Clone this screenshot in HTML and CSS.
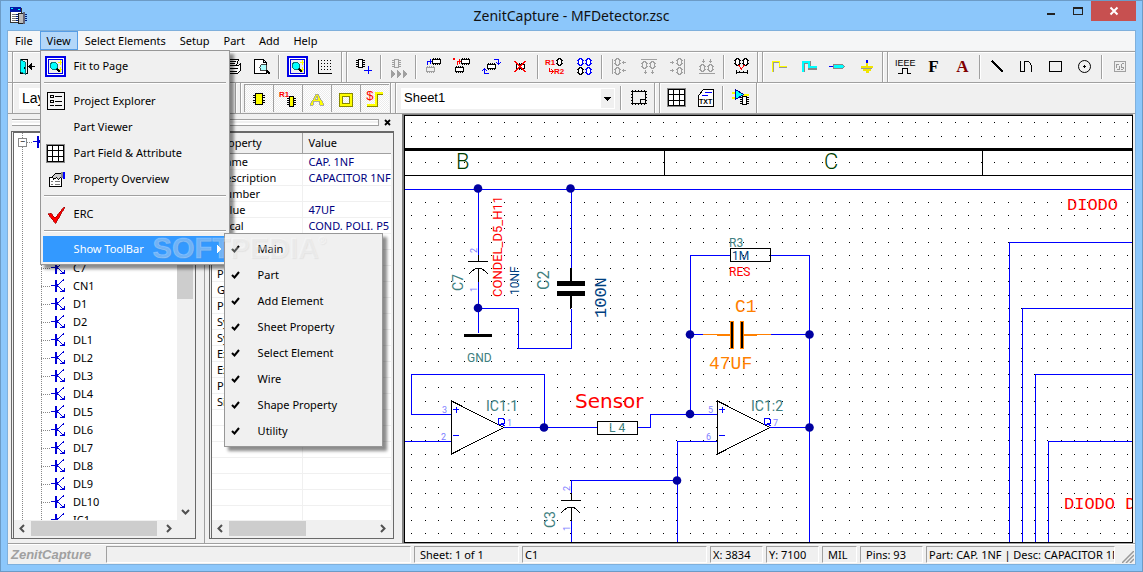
FILE: index.html
```html
<!DOCTYPE html>
<html lang="en">
<head>
<meta charset="utf-8">
<title>ZenitCapture - MFDetector.zsc</title>
<link rel="stylesheet" href="styles.css">
</head>
<body>
<svg class="defs" aria-hidden="true">
  <defs>
    <g id="chip"><path d="M2.500.5h4v8h-4zM0 1.500h2M0 3.500h2M0 5.500h2M0 7.500h2M7 1.500h2M7 3.500h2M7 5.500h2M7 7.500h2"/></g>
    <g id="chiph"><path d="M.5 2.500h8v4h-8zM1.500 1v1M3.500 1v1M5.500 1v1M7.500 1v1M1.500 7v1M3.500 7v1M5.500 7v1M7.500 7v1"/></g>
    <g id="oval"><path d="M2.500.5h2v1h1v5h-1v1h-2v-1h-1v-5h1zM0 2.500h1M0 5.500h1M6 2.500h1M6 5.500h1"/></g>
    <g id="fit">
      <path d="M3 3h19v19H3z" fill="#fff" stroke="#0000e8" stroke-width="2"/>
      <path d="M5.500 5.500h14v14h-14z" fill="#f0f0f0" stroke="#0000e8"/>
      <path d="M17.500 6v5M15 8.500h4M17.500 13v5M15 15.500h4" stroke="#ff0"/>
      <path d="M13 14l4 4" stroke="#000" stroke-width="2"/>
      <path d="M8.500 8.500h4l2 2v3l-2 2h-3l-2-2v-3z" fill="#0ff" stroke="#087878"/>
    </g>
    <g id="table"><path d="M4.500 4.500h16v16h-16zM9.500 4v17M15.500 4v17M4 9.500h17M4 15.500h17" fill="#fff" stroke="#000"/><path d="M3.500 3.500h18v18h-18z" fill="none" stroke="#888"/></g>
    <g id="npn"><path d="M0 6.500h5M6 6.500l7-6M6 6.500l7 6M9 12.500h4v-4" fill="none" stroke="#0000d8"/><path d="M5 1v12" stroke="#0000d8" stroke-width="2"/></g>
    <g id="opamp">
      <path d="M.5 0v53L53 26.500z" fill="#fff" stroke="#000"/>
      <path d="M2 8.500h6M5 5.500v6M2 34.500h6M48 17.500h4l1 1v4l-1 1h-4l-1-1v-4zM50 22l4 3" fill="none" stroke="#00f"/>
      <path d="M-13 13.500H0M-13 40.500H0M53 26.500h13" stroke="#00f"/>
    </g>
    <pattern id="grid" patternUnits="userSpaceOnUse" x="411" y="122" width="53" height="53">
      <path d="M0 .5h1m13 0h1m12 0h1m12 0h1M0 14.500h1m13 0h1m12 0h1m12 0h1M0 27.500h1m13 0h1m12 0h1m12 0h1M0 40.500h1m13 0h1m12 0h1m12 0h1" stroke="#000"/>
    </pattern>
  </defs>
</svg>

<div class="window">
  <header class="titlebar">
    <svg class="app-icon" viewBox="0 0 18 18"><path d="M1 1h11v14H1z" fill="#fff" stroke="#333"/><path d="M1 0h11v5H1z" fill="#0018a8"/><path d="M2 1h2v1H2zM9 2h2v1H9z" fill="#0ff"/><path d="M3 7h4M3 9h4M3 11h4M3 13h4" stroke="#777"/><path d="M9 6h5v10H9z" fill="#bbb" stroke="#222"/><path d="M14 5h2v12h-2z" fill="#667"/><path d="M7 7.500h2M7 9.500h2M7 11.500h2M7 13.500h2M16 7.500h2M16 9.500h2M16 11.500h2M16 13.500h2" stroke="#002080"/></svg>
    <h1 class="title">ZenitCapture - MFDetector.zsc</h1>
    <div class="caption-buttons">
      <button class="cap" aria-label="Minimize"><svg viewBox="0 0 10 10"><path d="M1 7h8v2H1z" fill="#222"/></svg></button>
      <button class="cap" aria-label="Maximize"><svg viewBox="0 0 10 10"><path d="M.5 1.500h9v7h-9z" fill="none" stroke="#222"/><path d="M0 1h10v2H0z" fill="#222"/></svg></button>
      <button class="cap close" aria-label="Close"><svg viewBox="0 0 10 10"><path d="M1.500 1.500l7 7M8.500 1.500l-7 7" stroke="#fff" stroke-width="2" shape-rendering="auto"/></svg></button>
    </div>
  </header>

  <main class="client">
    <nav class="menubar">
      <button>File</button>
      <div class="menu-anchor">
        <button class="open">View</button>
        <div class="menu view-menu">
          <button class="item"><svg class="mi" viewBox="0 0 25 25"><use href="#fit"/></svg>Fit to Page</button>
          <hr>
          <button class="item"><svg class="mi" viewBox="0 0 25 25"><path d="M4.500 3.500h17v17h-17z" fill="#f4f4f4" stroke="#000"/><path d="M7.500 6.500h3v2h-3zM7.500 11.500h3v2h-3zM7 16.500h4M12 7.500h7M12 12.500h7M12 16.500h7" fill="none" stroke="#000"/></svg>Project Explorer</button>
          <button class="item"><span class="mi"></span>Part Viewer</button>
          <button class="item"><svg class="mi" viewBox="0 0 25 25"><use href="#table"/></svg>Part Field &amp; Attribute</button>
          <button class="item"><svg class="mi" viewBox="0 0 25 25"><path d="M6.500 10.500h12v9h-12z" fill="#fff" stroke="#000"/><path d="M8 14.500h2M12 14.500h5M8 17.500h2M12 17.500h5" stroke="#777"/><path d="M9.500 9.500l3-3h6v3l-3 3-2-2-3 2z" fill="#ccc" stroke="#000"/><path d="M18 5h2v6h-2z" fill="#888"/><path d="M20 5h2v7h-2z" fill="#00f"/></svg>Property Overview</button>
          <hr>
          <button class="item"><svg class="mi" viewBox="0 0 25 25"><path d="M5 12l3-1 4 5 9-11h1l-9 16h-1z" fill="#f00" stroke="#900" stroke-width=".7"/></svg>ERC</button>
          <hr>
          <button class="item active"><span class="mi"></span>Show ToolBar<svg class="arrow" viewBox="0 0 4 8"><path d="M0 0l4 4-4 4z" fill="#fff"/></svg></button>
          <div class="menu submenu">
            <button class="item"><svg class="tick" viewBox="0 0 9 8"><path d="M1 4l2.500 2.500L8 1" /></svg>Main</button>
            <button class="item"><svg class="tick" viewBox="0 0 9 8"><path d="M1 4l2.500 2.500L8 1" /></svg>Part</button>
            <button class="item"><svg class="tick" viewBox="0 0 9 8"><path d="M1 4l2.500 2.500L8 1" /></svg>Add Element</button>
            <button class="item"><svg class="tick" viewBox="0 0 9 8"><path d="M1 4l2.500 2.500L8 1" /></svg>Sheet Property</button>
            <button class="item"><svg class="tick" viewBox="0 0 9 8"><path d="M1 4l2.500 2.500L8 1" /></svg>Select Element</button>
            <button class="item"><svg class="tick" viewBox="0 0 9 8"><path d="M1 4l2.500 2.500L8 1" /></svg>Wire</button>
            <button class="item"><svg class="tick" viewBox="0 0 9 8"><path d="M1 4l2.500 2.500L8 1" /></svg>Shape Property</button>
            <button class="item"><svg class="tick" viewBox="0 0 9 8"><path d="M1 4l2.500 2.500L8 1" /></svg>Utility</button>
          </div>
          <div class="watermark">SOFTPEDIA<sup>®</sup></div>
        </div>
      </div>
      <button>Select Elements</button>
      <button>Setup</button>
      <button>Part</button>
      <button>Add</button>
      <button>Help</button>
    </nav>

    <div class="toolbar">
      <div class="group group-main">
        <button class="tool" aria-label="Exit"><svg viewBox="0 0 24 24"><path d="M4.500 4.500h7v14h-7z" fill="#f0f0f0" stroke="#000"/><path d="M4.500 4.500l5 3v12l-5-3z" fill="#0ff" stroke="#0a7a7a"/><path d="M8 12v2M14 11.500h5" stroke="#000"/><path d="M12 11.500l4-4v8z" fill="#000"/></svg></button>
        <span class="spacer"></span>
        <button class="tool" aria-label="Print"><svg viewBox="0 0 24 24"><path d="M7.500 4.500h10l-2 6h-10zM4.500 10.500h13l2-2v7l-3 3h-12z" fill="#fff" stroke="#000"/><path d="M8 6.500h7M7 8.500h7M5 13.500h12M7 16.500h9" stroke="#000"/></svg></button>
        <button class="tool" aria-label="Print preview"><svg viewBox="0 0 24 24"><path d="M4.500 4.500h9l3 3v11h-12zM13.500 4.500v3h3" fill="#fff" stroke="#000"/><path d="M16 15l4 4" stroke="#000" stroke-width="2"/><circle cx="13.500" cy="12.500" r="3.500" fill="#aff" stroke="#444"/></svg></button>
        <i class="sep"></i>
        <button class="tool" aria-label="Fit to page"><svg viewBox="0 0 24 24"><use href="#fit" y="-1"/></svg></button>
        <button class="tool" aria-label="Grid"><svg viewBox="0 0 24 24"><path d="M4.500 5v13.500H18" fill="none" stroke="#000"/><path d="M7 5.500h11M7 8.500h11M7 11.500h11M7 14.500h11" stroke="#000" stroke-dasharray="1 2"/></svg></button>
      </div>
      <div class="group">
        <button class="tool" aria-label="Add part"><svg viewBox="0 0 24 24"><use href="#chip" x="4" y="4" fill="#fff" stroke="#000"/><path d="M16.500 11v8M12 15h8" stroke="#00f"/></svg></button>
        <i class="sep"></i>
        <button class="tool" aria-label="Next part"><svg viewBox="0 0 24 24"><use href="#chip" x="5" y="4" fill="#eee" stroke="#a0a0a0"/><path d="M4 15l4 4-4 4zM10 15l4 4-4 4zM16 15l4 4-4 4z" fill="#a0a0a0"/></svg></button>
        <i class="sep"></i>
        <button class="tool" aria-label="Rotate"><svg viewBox="0 0 24 24"><use href="#chiph" x="10" y="2" fill="#fff" stroke="#000"/><use href="#chiph" x="4" y="10" fill="#eee" stroke="#a0a0a0"/><path d="M5.500 10V6.500h4M8 4v5" fill="none" stroke="#00f"/></svg></button>
        <button class="tool" aria-label="Copy part"><svg viewBox="0 0 24 24"><use href="#chiph" x="10" y="2" fill="#fff" stroke="#000"/><use href="#chiph" x="4" y="10" fill="#fff" stroke="#000"/><path d="M6.500 10V6.500h3M8 4v5M2 3l2 2M2 5l2-2" fill="none" stroke="#f00"/></svg></button>
        <button class="tool" aria-label="Swap parts"><svg viewBox="0 0 24 24"><use href="#chiph" x="7" y="7" fill="#fff" stroke="#000"/><path d="M14 4.500h4.500V9M16 7l2.500 2L21 7M9 18.500H4.500V14M2 16l2.500-2L7 16" fill="none" stroke="#00f"/></svg></button>
        <button class="tool" aria-label="Delete part"><svg viewBox="0 0 24 24"><use href="#chiph" x="7" y="7" fill="#fff" stroke="#000"/><path d="M5.500 6l11 11M16.500 6l-11 11" stroke="#f00"/></svg></button>
        <i class="sep"></i>
        <button class="tool" aria-label="Renumber"><svg viewBox="0 0 24 24"><text x="1" y="10" class="pix red">R1</text><use href="#oval" x="12" y="3" fill="#fff" stroke="#000"/><path d="M5.500 13v3.500H9M7 14l2 2.500L7 19" fill="none" stroke="#f00"/><text x="10" y="19" class="pix red">R2</text></svg></button>
        <button class="tool" aria-label="Array"><svg viewBox="0 0 24 24" fill="#fff"><use href="#oval" x="4" y="3" stroke="#00f"/><use href="#oval" x="12" y="3" stroke="#00f"/><use href="#oval" x="4" y="12" stroke="#000"/><use href="#oval" x="12" y="12" stroke="#00f"/></svg></button>
        <i class="sep"></i>
        <button class="tool" aria-label="Align left"><svg viewBox="0 0 24 24" fill="none" stroke="#a0a0a0"><path d="M4.500 4v15M14 7.500h4M15.500 6v3M14 15.500h4M15.500 14v3"/><use href="#oval" x="6" y="3"/><use href="#oval" x="6" y="12"/></svg></button>
        <button class="tool" aria-label="Align top"><svg viewBox="0 0 24 24" fill="none" stroke="#a0a0a0"><path d="M4 4.500h16M8.500 15v4M7 17h3M15.500 15v4M14 17h3"/><use href="#oval" x="4" y="6"/><use href="#oval" x="12" y="6"/></svg></button>
        <button class="tool" aria-label="Align right"><svg viewBox="0 0 24 24" fill="none" stroke="#a0a0a0"><path d="M18.500 4v15M4 7.500h4M6.500 6v3M4 15.500h4M6.500 14v3"/><use href="#oval" x="10" y="3"/><use href="#oval" x="10" y="12"/></svg></button>
        <button class="tool" aria-label="Align bottom"><svg viewBox="0 0 24 24" fill="none" stroke="#a0a0a0"><path d="M4 18.500h16M8.500 4v4M7 6h3M15.500 4v4M14 6h3"/><use href="#oval" x="4" y="9"/><use href="#oval" x="12" y="9"/></svg></button>
        <i class="sep"></i>
        <button class="tool" aria-label="Measure"><svg viewBox="0 0 24 24"><use href="#oval" x="4" y="3" fill="#fff" stroke="#000"/><use href="#oval" x="12" y="3" fill="#fff" stroke="#000"/><path d="M8.500 10l3 4 3-4" fill="none" stroke="#f00"/><path d="M6 17.500h12M6.500 15v4M9.500 16v2M13.500 16v2M17.500 15v4" stroke="#000"/></svg></button>
      </div>
      <div class="group">
        <button class="tool" aria-label="Wire"><svg viewBox="0 0 24 24"><path d="M5.500 17V7.500h6v5H19" fill="none" stroke="#999"/><path d="M4.500 17V6.500h7v5H19" fill="none" stroke="#ff0"/></svg></button>
        <button class="tool" aria-label="Bus"><svg viewBox="0 0 24 24"><path d="M6 17V7h6v6h8" fill="none" stroke="#888" stroke-width="3"/><path d="M6 17V7h6v5h8" fill="none" stroke="#0ff" stroke-width="2"/></svg></button>
        <button class="tool" aria-label="Port"><svg viewBox="0 0 24 24"><path d="M3 11.500h4" stroke="#00f"/><path d="M7.500 9.500h9l2 2-2 2h-9z" fill="#0ff" stroke="#888"/></svg></button>
        <button class="tool" aria-label="Ground"><svg viewBox="0 0 24 24"><path d="M11 10v2M6 13.500h11M8 15.500h7" stroke="#999"/><path d="M12 8v4M6 12h12M8 14.500h8M11 17h3" stroke="#f0e400" stroke-width="2"/><path d="M12 5v3" stroke="#00f" stroke-width="2"/></svg></button>
      </div>
      <div class="group grow">
        <button class="tool" aria-label="IEEE symbol"><svg viewBox="0 0 24 24"><text x="2" y="11" class="ieee">IEEE</text><path d="M5 18.500h4v-5h5v5h4" fill="none" stroke="#000"/></svg></button>
        <button class="tool letter" aria-label="Font"><b>F</b></button>
        <button class="tool letter maroon" aria-label="Text"><b>A</b></button>
        <i class="sep"></i>
        <button class="tool" aria-label="Line"><svg viewBox="0 0 24 24"><path d="M6 6l11 11" stroke="#000" stroke-width="1.500"/></svg></button>
        <button class="tool" aria-label="Polyline"><svg viewBox="0 0 24 24"><path d="M5.500 6v10.500h4v-10h4l2 2 1 3v5" fill="none" stroke="#000"/></svg></button>
        <button class="tool" aria-label="Rectangle"><svg viewBox="0 0 24 24"><path d="M5.500 6.500h12v10h-12z" fill="none" stroke="#000"/></svg></button>
        <button class="tool" aria-label="Circle"><svg viewBox="0 0 24 24"><circle cx="11.500" cy="11.500" r="6" fill="none" stroke="#000" shape-rendering="auto"/><path d="M10 11.500h3M11.500 10v3" stroke="#000"/></svg></button>
        <i class="sep"></i>
        <button class="tool" aria-label="Image"><svg viewBox="0 0 24 24"><path d="M6.500 6.500h11v10h-11z" fill="#eee" stroke="#a0a0a0"/><path d="M8.500 13v-3l2-1M9 14.500h2l1-3M13 9v3h2v2l-2 1M14 8.500h2" fill="none" stroke="#999"/></svg></button>
      </div>
    </div>

    <div class="toolbar">
      <div class="group group-layer">
        <select class="layer" aria-label="Layer"><option>Layer</option></select>
      </div>
      <div class="group toggles">
        <button class="tool on" aria-label="Show parts"><svg viewBox="0 0 24 24"><path d="M8.500 6.500h7v11h-7z" fill="#ff0" stroke="#000"/><path d="M6 8.500h2M6 10.500h2M6 13.500h2M6 15.500h2M16 8.500h2M16 10.500h2M16 13.500h2M16 15.500h2" stroke="#000"/></svg></button>
        <button class="tool on" aria-label="Show references"><svg viewBox="0 0 24 24"><text x="3" y="10" class="pix red">R1</text><path d="M13.500 9.500h4v10h-4z" fill="#ff0" stroke="#000"/><path d="M11 11.500h2M11 13.500h2M11 15.500h2M11 17.500h2M18 11.500h2M18 13.500h2M18 15.500h2M18 17.500h2" stroke="#000"/></svg></button>
        <button class="tool on" aria-label="Show text"><svg viewBox="0 0 24 24"><path d="M5 18h3v-2l1-2h5l1 4h4L13 7h-2zM10 12l2-3 1 3z" fill="#ff0" fill-rule="evenodd" stroke="#999" stroke-width=".8"/></svg></button>
        <button class="tool on" aria-label="Show shapes"><svg viewBox="0 0 24 24"><path d="M7 8h10v10H7z" fill="none" stroke="#ff0" stroke-width="3"/><path d="M5.500 6.500h13v13h-13zM8.500 9.500h7v7h-7z" fill="none" stroke="#880"/></svg></button>
        <button class="tool on" aria-label="Show nets"><svg viewBox="0 0 24 24"><text x="3" y="13" class="dollar">$</text><path d="M4 18.500h9V6.500h7" fill="none" stroke="#880" stroke-width="3"/><path d="M4 18h9V6h7" fill="none" stroke="#ff0" stroke-width="2"/></svg></button>
      </div>
      <div class="group">
        <div class="sheet-box"><select class="sheet" aria-label="Sheet"><option>Sheet1</option></select></div>
        <i class="sep"></i>
        <button class="tool" aria-label="Sheet size"><svg viewBox="0 0 24 24"><path d="M5.500 5.500h13v12h-13zM13.500 17v-4h5" fill="none" stroke="#000"/><path d="M4.500 5v13M19.500 5v13" stroke="#000" stroke-dasharray="1 2"/><path d="M5 4.500h14M5 18.500h14" stroke="#000" stroke-dasharray="1 2"/></svg></button>
      </div>
      <div class="group">
        <button class="tool" aria-label="Attributes"><svg viewBox="0 0 24 24"><use href="#table" x="-1" y="-1"/></svg></button>
        <button class="tool" aria-label="Text report"><svg viewBox="0 0 24 24"><path d="M4.500 9.500l5-6h10v17h-15z" fill="#fff" stroke="#000"/><path d="M11 6.500h7M8 9.500h6" stroke="#00f"/><text x="5" y="18" class="txt">TXT</text></svg></button>
        <i class="sep"></i>
        <button class="tool" aria-label="Simulate"><svg viewBox="0 0 24 24"><path d="M3 6.500h4M3 11.500h4M13 8.500h7" stroke="#ff0" stroke-width="2"/><path d="M6.500 3.500v10l8-5z" fill="#0ff" stroke="#009"/><use href="#chip" x="11" y="10" fill="#fff" stroke="#000"/></svg></button>
      </div>
    </div>

    <div class="workspace">
      <aside class="dock">
        <div class="dock-caption"><span class="rails"></span><button aria-label="Close panel"><svg viewBox="0 0 7 7"><path d="M1 1l5 5M6 1L1 6" stroke="#000" stroke-width="1.800"/></svg></button></div>
        <div class="panes">
          <section class="pane">
            <div class="sunken">
              <div class="tree-area">
                <ul class="tree">
                  <li class="root"><button class="expander" aria-label="Collapse">−</button><i class="twig"></i><svg viewBox="0 0 14 14"><use href="#npn"/></svg></li>
                  <li><i class="twig"></i><svg viewBox="0 0 14 14"><use href="#npn"/></svg>C1</li>
                  <li><i class="twig"></i><svg viewBox="0 0 14 14"><use href="#npn"/></svg>C2</li>
                  <li><i class="twig"></i><svg viewBox="0 0 14 14"><use href="#npn"/></svg>C3</li>
                  <li><i class="twig"></i><svg viewBox="0 0 14 14"><use href="#npn"/></svg>C4</li>
                  <li><i class="twig"></i><svg viewBox="0 0 14 14"><use href="#npn"/></svg>C5</li>
                  <li><i class="twig"></i><svg viewBox="0 0 14 14"><use href="#npn"/></svg>C6</li>
                  <li><i class="twig"></i><svg viewBox="0 0 14 14"><use href="#npn"/></svg>C7</li>
                  <li><i class="twig"></i><svg viewBox="0 0 14 14"><use href="#npn"/></svg>CN1</li>
                  <li><i class="twig"></i><svg viewBox="0 0 14 14"><use href="#npn"/></svg>D1</li>
                  <li><i class="twig"></i><svg viewBox="0 0 14 14"><use href="#npn"/></svg>D2</li>
                  <li><i class="twig"></i><svg viewBox="0 0 14 14"><use href="#npn"/></svg>DL1</li>
                  <li><i class="twig"></i><svg viewBox="0 0 14 14"><use href="#npn"/></svg>DL2</li>
                  <li><i class="twig"></i><svg viewBox="0 0 14 14"><use href="#npn"/></svg>DL3</li>
                  <li><i class="twig"></i><svg viewBox="0 0 14 14"><use href="#npn"/></svg>DL4</li>
                  <li><i class="twig"></i><svg viewBox="0 0 14 14"><use href="#npn"/></svg>DL5</li>
                  <li><i class="twig"></i><svg viewBox="0 0 14 14"><use href="#npn"/></svg>DL6</li>
                  <li><i class="twig"></i><svg viewBox="0 0 14 14"><use href="#npn"/></svg>DL7</li>
                  <li><i class="twig"></i><svg viewBox="0 0 14 14"><use href="#npn"/></svg>DL8</li>
                  <li><i class="twig"></i><svg viewBox="0 0 14 14"><use href="#npn"/></svg>DL9</li>
                  <li><i class="twig"></i><svg viewBox="0 0 14 14"><use href="#npn"/></svg>DL10</li>
                  <li><i class="twig"></i><svg viewBox="0 0 14 14"><use href="#npn"/></svg>IC1</li>
                </ul>
                <div class="vscroll"><svg viewBox="0 0 9 9"><path d="M1 6l3.500-3.500L8 6"/></svg><i class="thumb"></i><span class="spacer"></span><svg viewBox="0 0 9 9"><path d="M1 3l3.500 3.500L8 3"/></svg></div>
              </div>
              <div class="hscroll corner"><svg viewBox="0 0 9 9"><path d="M6 1L2.500 4.500 6 8"/></svg><i class="thumb wide"></i><span class="spacer"></span><svg viewBox="0 0 9 9"><path d="M3 1l3.500 3.500L3 8"/></svg></div>
            </div>
          </section>
          <section class="pane pane-props">
            <div class="sunken">
              <div class="props-area">
                <table class="props">
                  <thead><tr><th>Property</th><th>Value</th></tr></thead>
                  <tbody>
                    <tr><td>Name</td><td>CAP. 1NF</td></tr>
                    <tr><td>Description</td><td>CAPACITOR 1NF</td></tr>
                    <tr><td>Number</td><td></td></tr>
                    <tr><td>Value</td><td>47UF</td></tr>
                    <tr><td>Local</td><td>COND. POLI. P5</td></tr>
                    <tr><td></td><td></td></tr>
                    <tr><td></td><td></td></tr>
                    <tr><td>Pins</td><td></td></tr>
                    <tr><td>Gate</td><td></td></tr>
                    <tr><td>Package</td><td></td></tr>
                    <tr><td>Symbol</td><td></td></tr>
                    <tr><td>Symbol 2</td><td></td></tr>
                    <tr><td>Extra 1</td><td></td></tr>
                    <tr><td>Extra 2</td><td></td></tr>
                    <tr><td>Price</td><td></td></tr>
                    <tr><td>Simulation</td><td></td></tr>
                    <tr><td></td><td></td></tr>
                    <tr><td></td><td></td></tr>
                    <tr><td></td><td></td></tr>
                    <tr><td></td><td></td></tr>
                    <tr><td></td><td></td></tr>
                    <tr><td></td><td></td></tr>
                    <tr><td></td><td></td></tr>
                  </tbody>
                </table>
              </div>
              <div class="hscroll"><svg viewBox="0 0 9 9"><path d="M6 1L2.500 4.500 6 8"/></svg><i class="thumb"></i><span class="spacer"></span><svg viewBox="0 0 9 9"><path d="M3 1l3.500 3.500L3 8"/></svg></div>
            </div>
          </section>
        </div>
      </aside>

      <div class="canvas">
        <svg class="sheet-view" role="img" aria-label="Schematic">
          <g transform="translate(-405 -116)">
            <rect x="405" y="116" width="2000" height="1500" fill="url(#grid)"/>
            <g class="ln" stroke="#000">
              <path d="M404 149.500H2400" stroke-width="3"/>
              <path d="M404 175.500H2400M664.500 151v24M982.500 151v24"/>
            </g>
            <path class="ln" stroke="#00f" d="M404 189.500H2400M478.500 189v66M571.500 189v79M478.500 282v51M478 308.500h40.500v40h53v-40M690.500 414V255.500H730M770 255.500h39.500V2000M690 334.500h14M770 334.500h40M404 441.500h35M438 414.500h-26.500v-40h133v53M516 427.500h81M637 427.500h13.500v-13H705M677.500 2000V441.500H705M677 480.500H571.500v13M571.500 521V2000M782 427.500h28M2400 242.500H1009.500V2000M2400 308.500H1022.500V2000M2400 374.500H1035.500V2000M2400 441.500H1048.500V2000"/>
            <g class="ln" stroke="#000">
              <path d="M478.500 255v6M468 261.500h20M478.500 268v14M469 274l3-3 4-2.500h5l4 2.500 3 3"/>
              <path d="M571.500 493v7M561 500.500h20M571.500 507v14M561 513l3-3 4-2.500h6l3 2.500 3 3"/>
              <path d="M464 335.500h28" stroke-width="3"/>
              <path d="M571 268v13M571 296v12" stroke-width="2"/>
              <path d="M557 283.500h28M557 293.500h28" stroke-width="5"/>
              <path d="M730.500 248.500h40v13h-40zM597.500 421.500h40v13h-40z"/>
            </g>
            <g class="ln" stroke="#ff8000" stroke-width="1">
              <path d="M703 334.500h14M757 334.500h14"/><path d="M717 335h13M743 335h14" stroke-width="2"/>
              <path d="M730.500 321.500h3v27h-3zM740.500 321.500h3v27h-3z" fill="#000"/>
              <path d="M732 322v26M742 322v26" stroke="#000" stroke-width="2"/>
            </g>
            <g class="ln"><use href="#opamp" x="451" y="401"/><use href="#opamp" x="717" y="401"/></g>
            <g fill="#0000a0">
              <circle cx="478" cy="188.500" r="4.300"/><circle cx="570.500" cy="188.500" r="4.300"/><circle cx="478" cy="308" r="4.300"/><circle cx="690" cy="334.500" r="4.300"/><circle cx="809.500" cy="334.500" r="4.300"/><circle cx="690" cy="414" r="4.300"/><circle cx="809.500" cy="427.500" r="4.300"/><circle cx="544" cy="427.500" r="4.300"/><circle cx="677" cy="480.500" r="4.300"/>
            </g>
            <g class="zone"><text x="456" y="169">B</text><text x="824" y="169">C</text></g>
            <g class="ref">
              <text transform="translate(463 291) rotate(-90)">C7</text>
              <text class="ref-l" transform="translate(549 290) rotate(-90)">C2</text>
              <text class="s12" x="467" y="362">GND</text>
              <text class="s12" x="729" y="247">R3</text>
              <text x="486" y="411">IC1:1</text>
              <text x="751" y="411">IC1:2</text>
              <text class="s12" x="609" y="432">L 4</text>
              <text transform="translate(555 528) rotate(-90)">C3</text>
            </g>
            <g class="note">
              <text transform="translate(502 297) rotate(-90)">CONDEL_D5_H11</text>
              <text class="s12" x="729" y="276">RES</text>
              <text class="sensor" x="575" y="408">Sensor</text>
              <text class="slab" x="1067" y="210">DIODO</text>
              <text class="slab" x="1064" y="509">DIODO DL</text>
            </g>
            <g class="val">
              <text class="s12" transform="translate(519 295) rotate(-90)">10NF</text>
              <text class="slab" transform="translate(606 318) rotate(-90)">100N</text>
              <text class="s12" x="732" y="260">1M</text>
            </g>
            <g class="sel"><text x="735" y="312">C1</text><text x="709" y="369">47UF</text></g>
            <g class="pin">
              <text transform="translate(477 253) rotate(-90)">2</text><text transform="translate(477 292) rotate(-90)">1</text>
              <text transform="translate(570 491) rotate(-90)">2</text><text transform="translate(570 531) rotate(-90)">1</text>
              <text x="442" y="413">3</text><text x="441" y="440">2</text><text x="507" y="426">1</text>
              <text x="708" y="413">5</text><text x="706" y="440">6</text><text x="773" y="426">7</text>
            </g>
          </g>
        </svg>
      </div>
    </div>

    <footer class="status">
      <span class="brand">ZenitCapture</span>
      <span class="cell w-blank"></span>
      <span class="cell w-sheet">Sheet: 1 of 1</span>
      <span class="cell w-part">C1</span>
      <span class="cell w-xy">X: 3834</span>
      <span class="cell w-xy">Y: 7100</span>
      <span class="cell w-unit">MIL</span>
      <span class="cell w-pins">Pins: 93</span>
      <span class="cell grow">Part: CAP. 1NF | Desc: CAPACITOR 1NF</span>
      <svg class="grip" viewBox="0 0 12 12"><path d="M0 12L12 0M4 12l8-8M8 12l4-4" stroke="#999" stroke-width="1.500"/></svg>
    </footer>
  </main>
</div>
</body>
</html>
```

FILE: styles.css
```css
* { box-sizing: border-box; }
body { margin: 0; font: 11px/16px "Noto Sans", "Open Sans", sans-serif; color: #000; overflow: hidden; }
button { font: inherit; color: inherit; background: none; border: 0; margin: 0; padding: 0; }
select { font: inherit; appearance: none; border: 0; border-radius: 0; background: #fff; }
svg { display: block; flex: none; shape-rendering: crispEdges; }
.defs { position: absolute; width: 0; height: 0; }
.spacer { flex: 1; }

.window { height: 100vh; display: flex; flex-direction: column; background: #8cc7fb; border: 1px solid #6c9bc6; padding: 0 6px 6px; }
.titlebar { height: 29px; flex: none; display: grid; grid-template-columns: 136px 1fr 136px; align-items: start; }
.app-icon { width: 18px; height: 18px; margin: 6px 0 0 2px; }
.title { margin: 5px 0 0; font-size: 14px; line-height: 20px; font-weight: 400; text-align: center; white-space: nowrap; color: #111; }
.caption-buttons { display: flex; justify-content: flex-end; }
.cap { width: 27px; height: 20px; display: flex; align-items: center; justify-content: center; }
.cap svg { width: 10px; height: 10px; }
.cap.close { width: 45px; background: #c75050; }

.client { flex: 1; min-height: 0; display: flex; flex-direction: column; background: #f0f0f0; border: 1px solid #7fb0dc; }

.menubar { height: 20px; flex: none; display: flex; background: #f5f6f7; border-bottom: 1px solid #f0f0f0; }
.menubar > button, .menu-anchor > button { height: 19px; padding: 0 7px; line-height: 18px; white-space: nowrap; }
.menu-anchor { position: relative; }
.menu-anchor > .open { background: #b3d7f9; border: 1px solid #569de5; padding: 0 6px; line-height: 17px; }
.menu { position: absolute; z-index: 5; background: #f0f0f0; border: 1px solid #979797; padding: 2px; box-shadow: 4px 4px 3px rgba(0, 0, 0, .45); }
.view-menu { left: 0; top: 19px; width: 190px; }
.submenu { left: 183px; top: 182px; width: 159px; }
.menu hr { margin: 3px 1px 4px; border: 0; border-top: 1px solid #a0a0a0; border-bottom: 1px solid #fff; }
.item { width: 100%; height: 26px; display: flex; align-items: center; text-align: left; white-space: nowrap; }
.item.active { background: #3399ff; color: #fff; }
.mi { width: 25px; height: 25px; margin-right: 6px; }
.arrow { width: 4px; height: 8px; margin: 0 6px 0 auto; }
.tick { width: 9px; height: 8px; margin: 0 18px 0 4px; fill: none; stroke: #000; stroke-width: 2; shape-rendering: auto; }
.watermark { position: absolute; z-index: 6; left: 112px; top: 181px; font: bold 29px/32px "Liberation Sans", sans-serif; color: rgba(255, 255, 255, .3); -webkit-text-stroke: 1px rgba(255, 255, 255, .2); text-shadow: 1px 1px 1px rgba(120, 120, 120, .12); white-space: nowrap; pointer-events: none; }
.watermark sup { font-size: 10px; line-height: 10px; vertical-align: 14px; }

.toolbar { height: 31px; flex: none; display: flex; gap: 4px; padding-left: 4px; border-top: 1px solid #a0a0a0; box-shadow: inset 0 1px #fff; }
.group { display: flex; align-items: center; padding: 0 1px 0 2px; border-left: 1px solid #a0a0a0; border-right: 1px solid #a0a0a0; box-shadow: inset 1px 0 #fff, 1px 0 #fff; }
.group.grow { flex: 1; border-right: 0; box-shadow: inset 1px 0 #fff; }
.group-main { width: 331px; padding-left: 0; }
.group-layer { width: 224px; padding-left: 6px; }
.tool { width: 29px; height: 28px; flex: none; display: flex; align-items: center; justify-content: center; }
.tool svg { width: 24px; height: 24px; }
.tool.on { border-left: 1px solid #a0a0a0; border-top: 1px solid #a0a0a0; background: repeating-conic-gradient(#fff 0 25%, #ececec 0 50%) 0 0 / 2px 2px; }
.toggles { padding-left: 3px; }
.sep { width: 6px; height: 24px; flex: none; background: linear-gradient(90deg, transparent 2px, #a0a0a0 2px 3px, #fff 3px 4px, transparent 4px); }
.letter { font: bold 17px/20px "Liberation Serif", serif; }
.maroon { color: #800000; }
.layer { width: 208px; height: 21px; padding: 0 3px; font: 14px/20px "Liberation Sans", sans-serif; }
.sheet-box { width: 214px; position: relative; background: #fff; margin-left: 3px; }
.sheet { width: 100%; height: 21px; padding: 0 3px; font: 13px/20px "Liberation Sans", sans-serif; }
.sheet-box::after { content: ""; position: absolute; right: 1px; top: 1px; width: 13px; height: 19px; background: linear-gradient(#000, #000) 3px 8px / 7px 1px no-repeat, linear-gradient(#000, #000) 4px 9px / 5px 1px no-repeat, linear-gradient(#000, #000) 5px 10px / 3px 1px no-repeat, linear-gradient(#000, #000) 6px 11px / 1px 1px no-repeat, #f0f0f0; pointer-events: none; }
.sheet-box + .sep { margin-left: 3px; }
.pix { font: bold 8px "Liberation Sans", sans-serif; }
.red { fill: #f00; }
.ieee { font: 9px "Liberation Sans", sans-serif; }
.dollar { font: 13px "Liberation Mono", monospace; fill: #f00; }
.txt { font: bold 7px "Liberation Sans", sans-serif; }

.workspace { flex: 1; min-height: 0; display: flex; border-top: 1px solid #a0a0a0; }
.dock { width: 394px; flex: none; display: flex; flex-direction: column; }
.dock-caption { height: 17px; flex: none; display: flex; align-items: center; gap: 5px; padding: 0 11px 0 4px; }
.rails { flex: 1; height: 7px; border: solid #a0a0a0; border-width: 1px 1px 1px 0; background: linear-gradient(#fff 1px, #f0f0f0 1px 3px, #fff 3px); }
.dock-caption svg { width: 7px; height: 7px; shape-rendering: auto; }
.panes { flex: 1; min-height: 0; display: flex; }
.pane { flex: 1; min-width: 0; display: flex; padding: 0 8px 4px 3px; border-right: 1px solid #a0a0a0; }
.pane-props { padding: 0 8px 4px 4px; border-right: 0; }
.sunken { flex: 1; min-width: 0; display: flex; flex-direction: column; border: 2px solid #696969; border-left: 3px double #696969; border-right-width: 1px; border-bottom: 1px solid #696969; padding: 0 2px 2px 0; }

.tree-area, .props-area { flex: 1; min-height: 0; display: flex; overflow: hidden; background: #fff; }
.tree { list-style: none; margin: 0; padding: 0 0 0 27px; flex: 1; background: linear-gradient(#888 50%, #fff 50%) 8px 12px / 1px 2px repeat-y; }
.tree li { height: 18px; display: flex; align-items: center; line-height: 18px; background: linear-gradient(#888 50%, #fff 50%) 0 0 / 1px 2px repeat-y; }
.tree li.root { margin-left: -23px; background: none; }
.tree svg { width: 14px; height: 14px; margin-right: 8px; }
.twig { width: 10px; height: 1px; background: linear-gradient(90deg, #888 50%, #fff 50%) 0 0 / 2px 1px; }
.expander { width: 9px; height: 9px; border: 1px solid #888; font-size: 9px; line-height: 6px; background: #fff; }
.root .twig { width: 6px; }
.vscroll { width: 16px; display: flex; flex-direction: column; align-items: center; padding: 4px 0; background: #f0f0f0; }
.vscroll .thumb { width: 16px; height: 150px; margin-top: 3px; background: #cdcdcd; }
.hscroll { height: 16px; flex: none; display: flex; align-items: center; padding: 0 4px; background: #f0f0f0; }
.hscroll.corner { padding-right: 20px; }
.hscroll .thumb { width: 77px; height: 15px; margin-left: 4px; background: #cdcdcd; }
.hscroll .thumb.wide { width: 126px; }
.hscroll svg, .vscroll svg { width: 9px; height: 9px; fill: none; stroke: #505050; stroke-width: 2; shape-rendering: auto; }

.props { width: 100%; table-layout: fixed; border-collapse: collapse; align-self: flex-start; }
.props th { height: 20px; padding: 0 0 0 5px; font-weight: 400; text-align: left; background: #f0f0f0; border-right: 1px solid #a0a0a0; border-bottom: 1px solid #a0a0a0; line-height: 18px; }
.props th:first-child { width: 90px; }
.props td { height: 16px; padding: 0 0 0 5px; border-right: 1px solid #f0f0f0; border-bottom: 1px solid #f0f0f0; line-height: 15px; white-space: nowrap; overflow: hidden; }
.props td + td, .props th + th { border-right: 0; padding-left: 6px; }
.props td + td { color: #000080; }

.canvas { flex: 1; min-width: 0; display: flex; border: solid #808080; border-width: 1px 0 0 2px; margin-right: 2px; }
.sheet-view { width: 100%; height: 100%; overflow: hidden; background: #fff; border: 1px solid #000; shape-rendering: auto; }
.ln { fill: none; shape-rendering: crispEdges; }
.sheet-view text { font-family: "Roboto", "Liberation Sans", sans-serif; font-weight: 400; }
.zone { fill: #004000; font-size: 22px; }
.sheet-view .zone text { font-weight: 300; }
.ref { fill: #408080; font-size: 14px; }
.ref-l { font-size: 16px; }
.note { fill: #f00; font-size: 13px; }
.val { fill: #004080; font-size: 13px; }
.s12 { font-size: 12px; }
.sheet-view .sensor { font-family: "DejaVu Sans", sans-serif; font-size: 20px; }
.sheet-view .slab { font-family: "Liberation Mono", monospace; font-size: 17px; }
.sel { fill: #ff8000; }
.sheet-view .sel text { font-family: "Liberation Mono", monospace; font-size: 18px; }
.pin { fill: #8080ff; font-size: 9px; }

.status { height: 21px; flex: none; display: flex; align-items: stretch; gap: 3px; padding: 2px 0 1px 3px; border-top: 1px solid #a0a0a0; box-shadow: inset 0 1px #fff; white-space: nowrap; }
.brand { width: 92px; font: italic bold 13px/18px "Liberation Sans", sans-serif; color: #a0a0a0; }
.cell { flex: none; overflow: hidden; padding-left: 5px; line-height: 16px; border: 1px solid #fff; border-top-color: #a0a0a0; border-left-color: #a0a0a0; }
.cell.grow { flex: 1; min-width: 0; padding-left: 2px; }
.w-blank { width: 305px; }
.w-sheet { width: 105px; }
.w-part { width: 185px; padding-left: 2px; }
.w-xy { width: 53px; padding-left: 2px; }
.w-unit { width: 35px; }
.w-pins { width: 63px; }
.grip { width: 12px; height: 12px; align-self: flex-end; margin: 0 1px 0 4px; shape-rendering: auto; }
```
